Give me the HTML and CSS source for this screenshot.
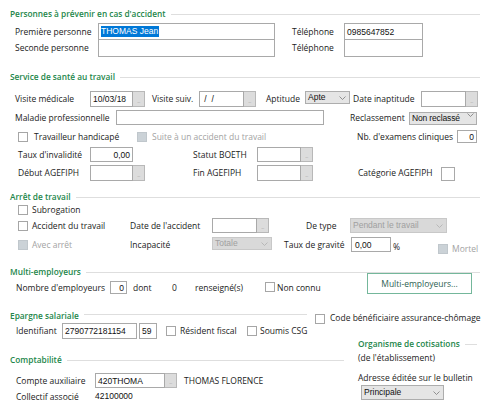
FILE: index.html
```html
<!DOCTYPE html>
<html lang="fr">
<head>
<meta charset="utf-8">
<title>Salarié</title>
<link rel="stylesheet" href="styles.css">
</head>
<body>
<div class="page">

  <div class="head s1"><span class="head-t">Personnes à prévenir en cas d'accident</span><span class="rule"></span></div>
  <div class="row p1">
    <span class="lbl ml15 w83">Première personne</span>
    <span class="box w177"><span class="hl">THOMAS Jean</span></span>
    <span class="lbl ml17 w52">Téléphone</span>
    <span class="box w79">0985647852</span>
  </div>
  <div class="row p2">
    <span class="lbl ml15 w83">Seconde personne</span>
    <span class="box w177"></span>
    <span class="lbl ml17 w52">Téléphone</span>
    <span class="box w79"></span>
  </div>

  <div class="head s2"><span class="head-t">Service de santé au travail</span><span class="rule"></span></div>
  <div class="row ra">
    <span class="lbl ml15 w75">Visite médicale</span>
    <span class="box w43">10/03/18</span><span class="dots">...</span>
    <span class="lbl ml7 w47">Visite suiv.</span>
    <span class="box w45">&nbsp;/&nbsp;&nbsp;/</span><span class="dots">...</span>
    <span class="lbl ml10 w39">Aptitude</span>
    <span class="sel w45 top"><span class="sv">Apte</span><svg class="chev" width="7" height="4" viewBox="0 0 7 4"><path d="M0.5 0.5 L3.5 3.5 L6.5 0.5"/></svg></span>
    <span class="lbl ml3 w68">Date inaptitude</span>
    <span class="box w45"></span><span class="dots">...</span>
  </div>
  <div class="row rb">
    <span class="lbl ml15 w101">Maladie professionnelle</span>
    <span class="box w208"></span>
    <span class="lbl ml26 w59">Reclassement</span>
    <span class="sel w68 bottom tight"><span class="sv">Non reclassé</span><svg class="chev" width="7" height="4" viewBox="0 0 7 4"><path d="M0.5 0.5 L3.5 3.5 L6.5 0.5"/></svg></span>
  </div>
  <div class="row rc">
    <span class="cb ml18"></span>
    <span class="lbl ml6 w103">Travailleur handicapé</span>
    <span class="cb dis"></span>
    <span class="lbl off ml5 w205">Suite à un accident du travail</span>
    <span class="lbl w100">Nb. d'examens cliniques</span>
    <span class="box w20 num">0</span>
  </div>
  <div class="row rd">
    <span class="lbl ml18 w72">Taux d'invalidité</span>
    <span class="box w43 num">0,00</span>
    <span class="lbl ml60 w64">Statut BOETH</span>
    <span class="box w44"></span><span class="dots">...</span>
  </div>
  <div class="row re">
    <span class="lbl ml18 w72">Début AGEFIPH</span>
    <span class="box w43"></span><span class="dots">...</span>
    <span class="lbl ml48 w64">Fin AGEFIPH</span>
    <span class="box w44"></span><span class="dots">...</span>
    <span class="lbl ml45 w83">Catégorie AGEFIPH</span>
    <span class="box sq"></span>
  </div>

  <div class="head s3"><span class="head-t">Arrêt de travail</span><span class="rule"></span></div>
  <div class="row rs">
    <span class="cb ml18"></span>
    <span class="lbl ml4">Subrogation</span>
  </div>
  <div class="row rac">
    <span class="cb ml18"></span>
    <span class="lbl ml4 w98">Accident du travail</span>
    <span class="lbl w82">Date de l'accident</span>
    <span class="box w45"></span><span class="dots">...</span>
    <span class="lbl ml37 w44">De type</span>
    <span class="sel dsel w97"><span class="sv">Pendant le travail</span><svg class="chev" width="7" height="4" viewBox="0 0 7 4"><path d="M0.5 0.5 L3.5 3.5 L6.5 0.5"/></svg></span>
  </div>
  <div class="row rav">
    <span class="cb dis ml18"></span>
    <span class="lbl off ml4 w98">Avec arrêt</span>
    <span class="lbl w82">Incapacité</span>
    <span class="sel dsel w60 top"><span class="sv">Totale</span><svg class="chev" width="7" height="4" viewBox="0 0 7 4"><path d="M0.5 0.5 L3.5 3.5 L6.5 0.5"/></svg></span>
    <span class="lbl ml12 w67">Taux de gravité</span>
    <span class="box w40 grav">0,00</span>
    <span class="lbl pct ml2 w45">%</span>
    <span class="cb dis low"></span>
    <span class="lbl off ml4 low">Mortel</span>
  </div>

  <div class="head s4"><span class="head-t">Multi-employeurs</span><span class="rule"></span></div>
  <div class="row rn">
    <span class="lbl ml16 w94">Nombre d'employeurs</span>
    <span class="box w17 num nb">0</span>
    <span class="lbl ml6 w39">dont</span>
    <span class="lbl w23">0</span>
    <span class="lbl w70">renseigné(s)</span>
    <span class="cb cbn"></span>
    <span class="lbl ml2 w90">Non connu</span>
    <button class="btn" type="button">Multi-employeurs...</button>
  </div>

  <div class="head s5">
    <span class="head-t">Epargne salariale</span><span class="rule rule5"></span>
    <span class="code">
      <span class="cb"></span>
      <span class="lbl ml5">Code bénéficiaire assurance-chômage</span>
    </span>
  </div>
  <div class="row ri">
    <span class="lbl ml16 w46">Identifiant</span>
    <span class="box w75">2790772181154</span>
    <span class="box ml2 w18">59</span>
    <span class="cb ml9"></span>
    <span class="lbl ml4 w67">Résident fiscal</span>
    <span class="cb"></span>
    <span class="lbl ml3">Soumis CSG</span>
  </div>

  <div class="bottom">
    <div class="left">
      <div class="head s6"><span class="head-t">Comptabilité</span><span class="rule"></span></div>
      <div class="row rca">
        <span class="lbl ml16 w79">Compte auxiliaire</span>
        <span class="box w70">420THOMA</span><span class="dots">...</span>
        <span class="lbl ml7">THOMAS FLORENCE</span>
      </div>
      <div class="row rco">
        <span class="lbl ml16 w79">Collectif associé</span>
        <span class="val">42100000</span>
      </div>
    </div>
    <div class="right">
      <div class="head s7"><span class="head-t">Organisme de cotisations</span><span class="rule"></span></div>
      <div class="row rsub"><span class="lbl">(de l'établissement)</span></div>
      <div class="row raddr"><span class="lbl">Adresse éditée sur le bulletin</span></div>
      <div class="row rpr">
        <span class="sel w83 ml3"><span class="sv">Principale</span><svg class="chev" width="7" height="4" viewBox="0 0 7 4"><path d="M0.5 0.5 L3.5 3.5 L6.5 0.5"/></svg></span>
      </div>
    </div>
  </div>

</div>
</body>
</html>
```

FILE: styles.css
```css
* { box-sizing: border-box; }
html, body { margin: 0; padding: 0; background: #fff; }
body {
  width: 489px;
  height: 419px;
  overflow: hidden;
  font-family: "Open Sans", "Noto Sans", sans-serif;
  font-size: 8.5px;
  color: #222;
}
.page { width: 489px; }

/* section headings */
.head { display: flex; align-items: center; height: 12px; margin-left: 10px; margin-right: 9px; }
.head-t { color: #23864a; font-weight: 600; font-size: 8.3px; white-space: nowrap; line-height: 12px; }
.rule { flex: 1; height: 1px; background: #dedede; margin-left: 5px; }

/* rows */
.row { display: flex; align-items: center; white-space: nowrap; }
.lbl { flex: none; line-height: 12px; }
.lbl.off { color: #a3a3a3; }

.box {
  flex: none;
  align-self: stretch;
  display: flex;
  align-items: center;
  border: 1px solid #a9a9a9;
  background: #fff;
  padding: 0 2px;
  font-family: "Liberation Sans", Arial, sans-serif;
  font-size: 8.5px;
  color: #111;
  overflow: hidden;
}
.box.num { justify-content: flex-end; }
.box.sq { width: 14px; height: 14px; align-self: flex-end; }
.box.grav { padding-left: 3px; }
.hl { background: #0078d7; color: #fff; line-height: 11px; padding-right: 1px; }

.dots {
  flex: none;
  align-self: stretch;
  width: 12px;
  background: #dcdcdc;
  border: 1px solid #b8b8b8;
  border-left: none;
  color: #a6a6a6;
  font-size: 5px;
  line-height: 5px;
  display: flex;
  align-items: flex-end;
  justify-content: center;
  padding-bottom: 2px;
  letter-spacing: -0.5px;
}

.sel {
  flex: none;
  display: flex;
  align-items: center;
  justify-content: space-between;
  height: 13px;
  border: 1px solid #adadad;
  background: #e5e5e5;
  padding: 0 3px 0 2px;
  font-family: "Liberation Sans", Arial, sans-serif;
  font-size: 8.5px;
  color: #111;
  overflow: hidden;
}
.sv { flex: none; line-height: 11px; }
.sel.tight { padding-right: 2px; }
.sel.tight .sv { letter-spacing: -0.15px; }
.sel.top { align-self: flex-start; }
.sel.bottom { align-self: flex-end; }
.sel.dsel { align-self: stretch; height: auto; background: #d9d9d9; border-color: #c8c8c8; color: #a0a0a0; }
.sel.dsel.top { align-self: flex-start; height: 13px; }
.chev { flex: none; margin-left: 1px; }
.chev path { fill: none; stroke: #7a7a7a; stroke-width: 0.8; }
.dsel .chev path { stroke: #b0b0b0; }

.cb { flex: none; width: 10px; height: 10px; border: 1px solid #a6a6a6; background: #fff; }
.cb.dis { background: #cbd2d7; border-color: #c0c7cc; }
.low { margin-top: 8px; }
.pct { margin-top: 4px; }

.btn {
  flex: none;
  align-self: stretch;
  width: 105px;
  margin: 0;
  padding: 0;
  border: 1px solid #74b79b;
  background: #fff;
  font-family: "Open Sans", "Noto Sans", sans-serif;
  font-size: 8.5px;
  color: #2e5f52;
}
.val { font-family: "Liberation Sans", Arial, sans-serif; font-size: 8.5px; color: #111; margin-top: -2px; }

/* vertical rhythm */
.s1 { margin-top: 8px; }
.p1 { margin-top: 3px; height: 17px; }
.p2 { margin-top: -1px; height: 18px; }
.s2 { margin-top: 14px; }
.ra { margin-top: 8px; height: 16px; }
.rb { margin-top: 3px; height: 15px; }
.rc { margin-top: 5px; height: 13px; }
.rd { margin-top: 4px; height: 15px; }
.re { margin-top: 3px; height: 16px; }
.s3 { margin-top: 10px; }
.rs { margin-top: 1px; height: 12px; }
.rac { margin-top: 2px; height: 15px; }
.rav { margin-top: 4px; height: 15px; }
.s4 { margin-top: 14px; }
.rn { margin-top: -5px; height: 22px; align-items: flex-end; padding-bottom: 1px; }
.rn .nb { align-self: flex-end; height: 13px; }
.rn .cbn { margin-bottom: 2px; }
.s5 { margin-top: 15px; height: 14px; align-items: flex-start; }
.s5 .rule5 { margin-top: 4px; }
.code { flex: none; width: 165px; margin-left: 8px; display: flex; align-items: flex-start; }
.code .cb { margin-top: 4px; }
.code .lbl { margin-top: 2px; }
.ri { margin-top: -1px; height: 16px; }

.bottom { display: flex; align-items: flex-start; }
.left { width: 344px; flex: none; }
.right { width: 120px; flex: none; margin-left: 14px; }
.s6 { margin-top: 15px; margin-right: 0; }
.rca { margin-top: 7px; height: 15px; }
.rco { margin-top: 3px; height: 12px; }
.s7 { margin-top: -1px; margin-left: 0; margin-right: 1px; }
.rsub { margin-top: 2px; height: 12px; }
.raddr { margin-top: 8px; height: 12px; }
.rpr { margin-top: 1px; height: 15px; }
.rpr .sel { height: 15px; }

/* widths and offsets */
.w17 { width: 17px; } .w18 { width: 18px; } .w20 { width: 20px; } .w23 { width: 23px; }
.w39 { width: 39px; } .w40 { width: 40px; } .w43 { width: 43px; } .w44 { width: 44px; }
.w45 { width: 45px; } .w46 { width: 46px; } .w47 { width: 47px; } .w52 { width: 52px; }
.w59 { width: 59px; } .w60 { width: 60px; } .w64 { width: 64px; } .w67 { width: 67px; }
.w68 { width: 68px; } .w70 { width: 70px; } .w72 { width: 72px; } .w75 { width: 75px; }
.w79 { width: 79px; } .w82 { width: 82px; } .w83 { width: 83px; } .w90 { width: 90px; }
.w94 { width: 94px; } .w97 { width: 97px; } .w98 { width: 98px; } .w100 { width: 100px; }
.w101 { width: 101px; } .w103 { width: 103px; } .w177 { width: 177px; } .w205 { width: 205px; }
.w208 { width: 208px; }
.ml2 { margin-left: 2px; } .ml3 { margin-left: 3px; } .ml4 { margin-left: 4px; } .ml5 { margin-left: 5px; }
.ml6 { margin-left: 6px; } .ml7 { margin-left: 7px; } .ml9 { margin-left: 9px; } .ml10 { margin-left: 10px; }
.ml12 { margin-left: 12px; } .ml15 { margin-left: 15px; } .ml16 { margin-left: 16px; } .ml17 { margin-left: 17px; }
.ml18 { margin-left: 18px; } .ml26 { margin-left: 26px; } .ml37 { margin-left: 37px; } .ml45 { margin-left: 45px; }
.ml48 { margin-left: 48px; } .ml60 { margin-left: 60px; }
```
